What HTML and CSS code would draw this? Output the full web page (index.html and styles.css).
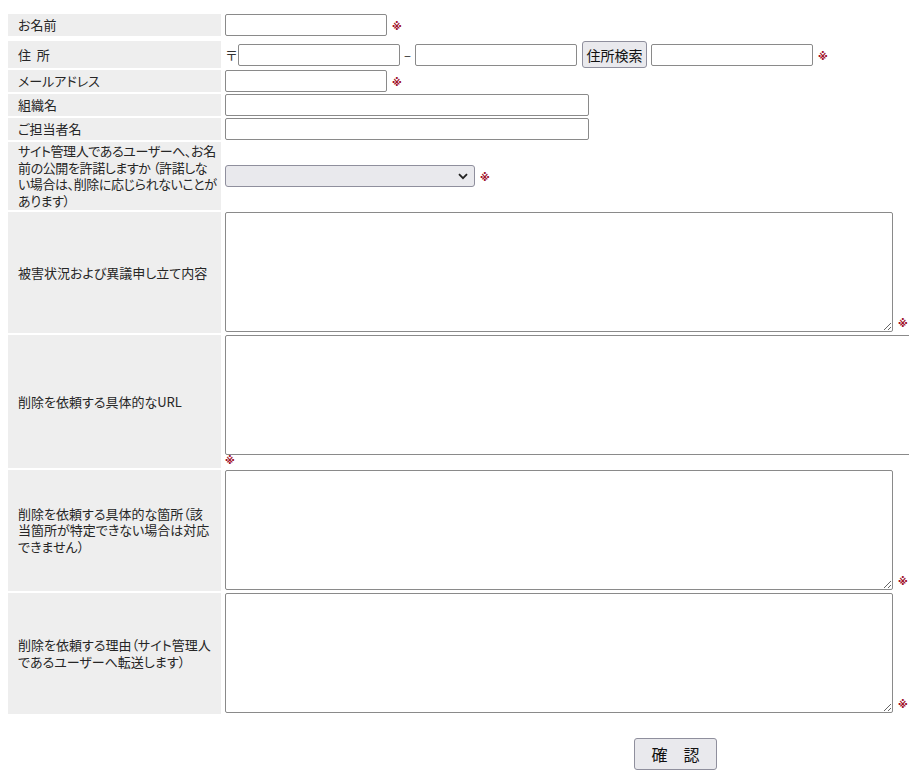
FILE: index.html
```html
<!DOCTYPE html>
<html lang="ja">
<head>
<meta charset="utf-8">
<title>削除依頼フォーム</title>
<link rel="stylesheet" href="styles.css">
</head>
<body>
<form class="form">
  <div class="grid">
    <div class="label">お名前</div>
    <div class="value v-center"><input class="in-s" type="text"><span class="req">※</span></div>

    <div class="label label-addr">住&nbsp;&nbsp;所</div>
    <div class="value v-center addr"><span class="zip">〒</span><input class="in-s" type="text"><span class="dash">–</span><input class="in-s" type="text"><button type="button" class="btn-search">住所検索</button><input class="in-s" type="text"><span class="req">※</span></div>

    <div class="label">メールアドレス</div>
    <div class="value v-center"><input class="in-s" type="text"><span class="req">※</span></div>

    <div class="label">組織名</div>
    <div class="value v-center"><input class="in-m" type="text"></div>

    <div class="label">ご担当者名</div>
    <div class="value v-center"><input class="in-m" type="text"></div>

    <div class="label label-multi tight">サイト管理人であるユーザーへ、お名<br>前の公開を許諾しますか （許諾しな<br>い場合は、削除に応じられないことが<br>あります）</div>
    <div class="value v-center"><span class="select-wrap"><select class="sel"><option></option></select><svg class="chev" width="10" height="7" viewBox="0 0 10 7"><path d="M1 1.2 L5 5.2 L9 1.2" fill="none" stroke="#222" stroke-width="1.8"/></svg></span><span class="req">※</span></div>

    <div class="label">被害状況および異議申し立て内容</div>
    <div class="value v-bottom"><textarea class="ta"></textarea><span class="req">※</span></div>

    <div class="label">削除を依頼する具体的なURL</div>
    <div class="value v-wrap"><textarea class="ta ta-wide"></textarea><span class="req req-line">※</span></div>

    <div class="label label-multi">削除を依頼する具体的な箇所（該<br>当箇所が特定できない場合は対応<br>できません）</div>
    <div class="value v-bottom"><textarea class="ta"></textarea><span class="req">※</span></div>

    <div class="label label-multi">削除を依頼する理由（サイト管理人<br>であるユーザーへ転送します）</div>
    <div class="value v-bottom"><textarea class="ta"></textarea><span class="req">※</span></div>
  </div>
  <div class="actions">
    <button type="button" class="btn-confirm">確　認</button>
  </div>
</form>
</body>
</html>
```

FILE: styles.css
```css
html {
  overflow: hidden;
  background: #ffffff;
}

body {
  margin: 8px 0 0 8px;
  font-family: "Noto Sans CJK JP", "Noto Sans", sans-serif;
  font-size: 13px;
  color: #262626;
}

.form {
  padding-top: 6px;
}

.grid {
  display: grid;
  grid-template-columns: 213px 688px;
  row-gap: 2px;
  width: 901px;
}

.label {
  background: #eeeeee;
  display: flex;
  align-items: center;
  padding: 0 0 0 10px;
  line-height: 16px;
  font-feature-settings: "palt";
  white-space: nowrap;
  overflow: hidden;
}

.label-addr {
  margin-top: 3px;
}

.label-multi {
  padding-top: 1px;
  padding-bottom: 1px;
  line-height: 16.5px;
}

.tight {
  letter-spacing: -0.4px;
}

.value {
  padding-left: 4px;
  display: flex;
  min-width: 0;
}

.v-center {
  align-items: center;
}

.v-center .req {
  margin-top: 4px;
}

.addr {
  margin-top: 3px;
}

.v-bottom {
  align-items: flex-end;
  padding-bottom: 1px;
}

.v-wrap {
  flex-wrap: wrap;
  align-items: flex-start;
}

input[type="text"] {
  box-sizing: border-box;
  height: 22px;
  border: 1px solid #8a8a8a;
  border-radius: 2px;
  padding: 1px 2px;
  font: inherit;
  background: #ffffff;
  margin: 0;
}

.in-s {
  width: 162px;
}

.in-m {
  width: 364px;
}

.req {
  color: #a0122a;
  font-family: "DejaVu Sans", sans-serif;
  font-size: 10px;
  font-weight: bold;
  line-height: 12px;
  margin-left: 5px;
}

.req-line {
  margin-left: 0;
  flex-basis: 100%;
  height: 13px;
}

.v-bottom .req {
  margin-bottom: 2px;
}

.zip {
  color: #333333;
  font-size: 13px;
}

.dash {
  margin: 0 4px;
  color: #333333;
}

.btn-search {
  box-sizing: border-box;
  height: 27px;
  width: 65px;
  margin: 0 4px 0 5px;
  padding: 0;
  background: #e9e9ed;
  border: 1px solid #8f8f9d;
  border-radius: 3px;
  font-family: "Noto Sans CJK JP", sans-serif;
  font-size: 14px;
  color: #111111;
  font-feature-settings: "palt";
}

.select-wrap {
  position: relative;
  display: inline-flex;
}

.sel {
  -webkit-appearance: none;
  appearance: none;
  box-sizing: border-box;
  width: 250px;
  height: 22px;
  margin: 0;
  background: #e9e9ed;
  border: 1px solid #8f8f9d;
  border-radius: 3px;
  font: inherit;
}

.chev {
  position: absolute;
  right: 7px;
  top: 8px;
  pointer-events: none;
}

.ta {
  box-sizing: border-box;
  width: 668px;
  height: 120px;
  margin: 0;
  border: 1px solid #8a8a8a;
  border-radius: 2px;
  flex-shrink: 0;
  font: inherit;
  display: block;
}

.ta-wide {
  width: 720px;
}

.actions {
  padding: 24px 0 0 626px;
}

.btn-confirm {
  box-sizing: border-box;
  width: 83px;
  height: 32px;
  padding: 0;
  background: #e9e9ed;
  border: 1px solid #8f8f9d;
  border-radius: 3px;
  font-family: "Noto Sans CJK JP", sans-serif;
  font-size: 16px;
  color: #111111;
}
```
